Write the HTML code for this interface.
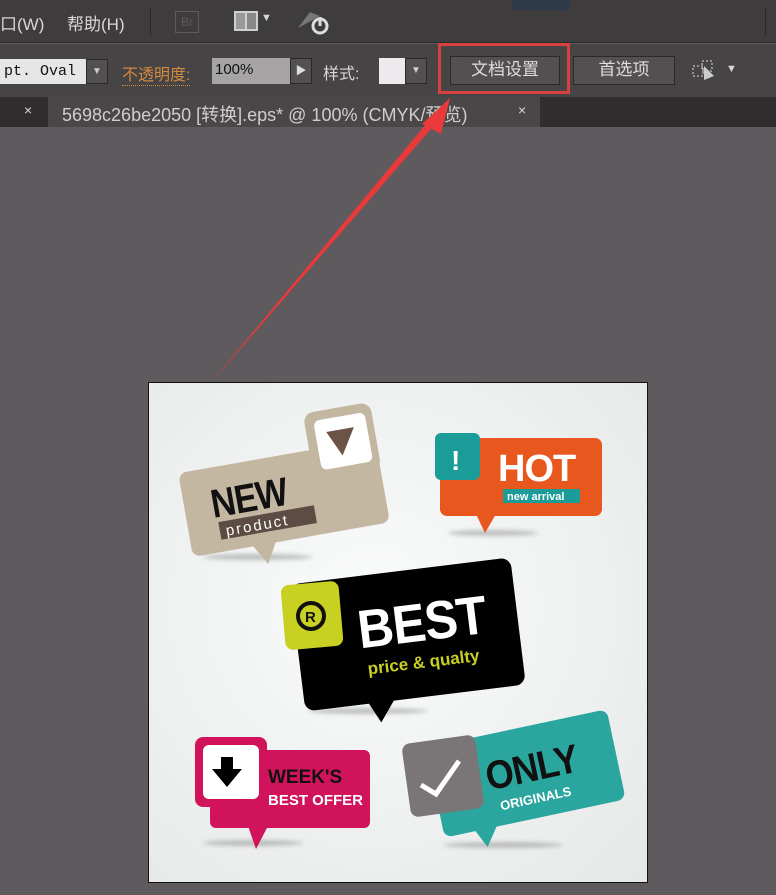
<!DOCTYPE html>
<html><head><meta charset="utf-8"><style>
*{margin:0;padding:0;box-sizing:border-box}
body{width:776px;height:895px;overflow:hidden;background:#5e5a5d;font-family:"Liberation Sans","Noto Sans CJK SC",sans-serif;position:relative}
.abs{position:absolute}
.menu{left:0;top:0;width:776px;height:43px;background:#3f3c3e;border-bottom:1px solid #2c2a2b}
.tool{left:0;top:44px;width:776px;height:53px;background:#474445}
.tabs{left:0;top:97px;width:776px;height:30px;background:#2f2d2e}
.t{color:#d8d6d7;font-size:17px}
.btn{background:#535051;border:1px solid #2a2829;color:#dedcdd;font-size:17px;text-align:center;line-height:26px}
</style></head><body>
<div class="abs menu"></div>
<div class="abs t" style="left:0;top:10px">口(W)</div>
<div class="abs t" style="left:67px;top:10px">帮助(H)</div>
<div class="abs" style="left:150px;top:8px;width:1px;height:28px;background:#2a2829"></div>
<div class="abs" style="left:175px;top:11px;width:24px;height:22px;border:1px solid #5d5a5b;color:#5d5a5b;font-size:12px;text-align:center;line-height:20px">Br</div>
<div class="abs" style="left:234px;top:11px;width:24px;height:20px;border:2px solid #cfcfcf;background:linear-gradient(90deg,#999 0 45%,#cfcfcf 45% 55%,#888 55%)"></div>
<div class="abs t" style="left:261px;top:12px;font-size:11px">▼</div>
<svg class="abs" style="left:296px;top:8px" width="36" height="28"><path d="M2 20 L14 4 L24 8 Z" fill="#777"/><circle cx="24" cy="18" r="7" fill="none" stroke="#ddd" stroke-width="3"/><rect x="22.5" y="9" width="3" height="9" fill="#ddd"/></svg>
<div class="abs" style="left:512px;top:0;width:58px;height:10px;background:#2e3b4a;border-radius:0 0 4px 4px"></div>
<div class="abs" style="left:765px;top:8px;width:1px;height:28px;background:#2a2829"></div>
<div class="abs tool"></div>
<div class="abs" style="left:0;top:59px;width:86px;height:25px;background:#e6e6e6;color:#111;font-family:'Liberation Mono',monospace;font-size:15px;line-height:25px;padding-left:4px">pt. Oval</div>
<div class="abs" style="left:86px;top:59px;width:22px;height:25px;background:#535051;border:1px solid #2a2829;color:#ccc;font-size:10px;text-align:center;line-height:23px">▼</div>
<div class="abs" style="left:122px;top:61px;color:#d38a3d;font-size:16px;border-bottom:1px dotted #d38a3d">不透明度:</div>
<div class="abs" style="left:212px;top:58px;width:78px;height:26px;background:#a6a4a5;color:#111;font-size:15px;line-height:24px;padding-left:3px">100%</div>
<div class="abs" style="left:290px;top:58px;width:22px;height:26px;background:#535051;border:1px solid #2a2829;color:#ddd;font-size:11px;text-align:center;line-height:24px">▶</div>
<div class="abs t" style="left:323px;top:60px;font-size:16px">样式:</div>
<div class="abs" style="left:379px;top:58px;width:26px;height:26px;background:#eceaec"></div>
<div class="abs" style="left:405px;top:58px;width:22px;height:26px;background:#535051;border:1px solid #2a2829;color:#ccc;font-size:10px;text-align:center;line-height:24px">▼</div>
<div class="abs btn" style="left:450px;top:56px;width:110px;height:29px">文档设置</div>
<div class="abs btn" style="left:573px;top:56px;width:102px;height:29px">首选项</div>
<div class="abs" style="left:438px;top:43px;width:132px;height:51px;border:3px solid #d83f3f"></div>
<svg class="abs" style="left:690px;top:58px" width="30" height="26"><rect x="3" y="8" width="10" height="10" fill="none" stroke="#ddd" stroke-dasharray="2 2"/><rect x="12" y="3" width="10" height="10" fill="none" stroke="#ddd" stroke-dasharray="2 2"/><path d="M14 8 L24 18 L14 22Z" fill="#ccc"/></svg>
<div class="abs t" style="left:726px;top:63px;font-size:11px">▼</div>
<div class="abs tabs"></div>
<div class="abs" style="left:48px;top:97px;width:492px;height:30px;background:#4a4748"></div>
<div class="abs t" style="left:24px;top:102px;font-size:14px">×</div>
<div class="abs t" style="left:62px;top:101px;font-size:18px;color:#cfcdce">5698c26be2050 [转换].eps* @ 100% (CMYK/预览)</div>
<div class="abs t" style="left:518px;top:102px;font-size:14px">×</div>
<div class="abs" style="left:148px;top:382px;width:500px;height:501px;border:1px solid #111;background:radial-gradient(ellipse at 45% 45%,#fafbfb,#e6e8e8)"></div>
<svg class="abs" style="left:148px;top:383px" width="500" height="500" font-family="Liberation Sans,sans-serif" font-weight="bold">
<defs><filter id="b"><feGaussianBlur stdDeviation="2"/></filter></defs>
<g fill="#999" opacity=".6" filter="url(#b)"><ellipse cx="110" cy="174" rx="55" ry="3"/><ellipse cx="345" cy="150" rx="45" ry="3"/><ellipse cx="220" cy="328" rx="60" ry="3"/><ellipse cx="105" cy="460" rx="50" ry="3"/><ellipse cx="355" cy="462" rx="60" ry="3"/></g>
<!-- NEW -->
<g transform="rotate(-10 120 110)">
<rect x="35" y="75" width="200" height="85" rx="8" fill="#c3b7a1"/>
<path d="M95 158 L108 180 L120 158Z" fill="#c3b7a1"/>
<rect x="168" y="38" width="68" height="68" rx="10" fill="#c3b7a1"/>
<rect x="177" y="47" width="52" height="50" rx="6" fill="#fff"/>
<path d="M188 60 L216 60 L200 86Z" fill="#6b5446"/>
<text x="62" y="125" font-size="40" fill="#111" transform="translate(62 0) scale(0.85 1) translate(-62 0)" letter-spacing="-1">NEW</text>
<rect x="66" y="130" width="97" height="18" fill="#5d4c44"/>
<text x="72" y="145" font-size="15" fill="#fff" font-weight="normal" letter-spacing="2">product</text>
</g>
<!-- HOT -->
<rect x="292" y="55" width="162" height="78" rx="7" fill="#e8571e"/>
<path d="M328 131 L337 150 L348 131Z" fill="#e8571e"/>
<rect x="287" y="50" width="45" height="47" rx="6" fill="#1b9c98"/>
<text x="303" y="87" font-size="28" fill="#fff">!</text>
<text x="350" y="98" font-size="38" fill="#fff" letter-spacing="-1">HOT</text>
<rect x="355" y="106" width="77" height="14" fill="#1b9c98"/>
<text x="359" y="117" font-size="11" fill="#fff">new arrival</text>
<!-- BEST -->
<g transform="rotate(-7 255 245)">
<rect x="148" y="188" width="222" height="128" rx="10" fill="#000"/>
<path d="M210 312 L222 336 L240 312Z" fill="#000"/>
<text x="210" y="260" font-size="54" fill="#fff" letter-spacing="-1" transform="translate(210 0) scale(0.92 1) translate(-210 0)">BEST</text>
<text x="215" y="287" font-size="17" fill="#c8d021">price &amp; qualty</text>
</g>
<rect x="135" y="200" width="58" height="65" rx="8" fill="#c8d021" transform="rotate(-5 164 232)"/>
<circle cx="163" cy="233" r="13" fill="none" stroke="#111" stroke-width="4"/>
<text x="157" y="239" font-size="15" fill="#111">R</text>
<!-- WEEK'S -->
<rect x="62" y="367" width="160" height="78" rx="6" fill="#d0135b"/>
<path d="M100 443 L108 466 L120 443Z" fill="#d0135b"/>
<rect x="47" y="354" width="72" height="70" rx="8" fill="#d0135b"/>
<rect x="55" y="362" width="56" height="54" rx="6" fill="#fff"/>
<path d="M73 374 L85 374 L85 386 L94 386 L79 404 L64 386 L73 386Z" fill="#000"/>
<text x="120" y="400" font-size="19" fill="#111">WEEK'S</text>
<text x="120" y="422" font-size="15" fill="#fff">BEST OFFER</text>
<!-- ONLY -->
<g transform="rotate(-12 375 390)">
<rect x="285" y="345" width="185" height="92" rx="8" fill="#2aa69e"/>
<path d="M315 434 L325 455 L340 434Z" fill="#2aa69e"/>
<text x="338" y="400" font-size="40" fill="#111" letter-spacing="-1" transform="translate(338 0) scale(0.9 1) translate(-338 0)">ONLY</text>
<text x="346" y="422" font-size="13" fill="#fff">ORIGINALS</text>
</g>
<rect x="258" y="356" width="74" height="74" rx="8" fill="#7a7678" transform="rotate(-8 295 393)"/>
<path d="M273 402 L288 411 L311 378" stroke="#fff" stroke-width="5" fill="none"/>
</svg>
<svg class="abs" style="left:0;top:0" width="776" height="895">
<path d="M209 385 L431 118 L437 122 Z" fill="#e8393b"/>
<path d="M450 98 L422 124 L441 134 Z" fill="#e8393b"/>
</svg>
</body></html>
